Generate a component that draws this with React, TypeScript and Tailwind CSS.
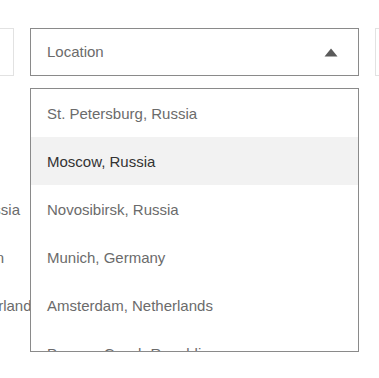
const cities = [
  'St. Petersburg, Russia',
  'Moscow, Russia',
  'Novosibirsk, Russia',
  'Munich, Germany',
  'Amsterdam, Netherlands',
  'Prague, Czech Republic',
]

function Caret() {
  return (
    <svg width="14" height="9" viewBox="0 0 14 9" className="shrink-0">
      <path d="M7 0.5 L13.5 8.5 L0.5 8.5 Z" fill="#5a5a5a" />
    </svg>
  )
}

function SideColumn() {
  return (
    <div className="w-[329px] shrink-0 ml-[-315px] flex flex-col gap-3">
      <div className="h-12 border border-[#e2e2e2] bg-white" />
      <div className="flex flex-col text-[15px] text-[#6b6b6b] pt-[2px]">
        <div className="h-12" />
        <div className="h-12" />
        <div className="h-12 flex items-center justify-end mr-[-6px]">Novosibirsk, Russia</div>
        <div className="h-12 flex items-center justify-end mr-[10px]">Berlin</div>
        <div className="h-12 flex items-center justify-end mr-[-25px]">Amsterdam, Netherlands</div>
      </div>
    </div>
  )
}

function LocationSelect() {
  return (
    <div className="w-[329px] shrink-0 flex flex-col gap-3 relative z-10">
      <div className="h-12 border border-[#8a8a8a] bg-white flex items-center justify-between pl-4 pr-[20px] text-[15px] text-[#6b6b6b]">
        <span>Location</span>
        <Caret />
      </div>
      <div className="h-[264px] border border-[#8a8a8a] bg-white overflow-hidden">
        {cities.map((city, i) => (
          <div
            key={city}
            className={
              i === 1
                ? 'h-12 flex items-center px-4 pt-[2px] text-[15px] bg-[#f2f2f2] text-[#333333]'
                : 'h-12 flex items-center px-4 pt-[2px] text-[15px] text-[#6b6b6b]'
            }
          >
            {city}
          </div>
        ))}
      </div>
    </div>
  )
}

export default function App() {
  return (
    <div
      className="w-[379px] h-[378px] bg-white overflow-hidden pt-7"
      style={{ fontFamily: '"Liberation Sans", Arial, sans-serif' }}
    >
      <div className="flex gap-4">
        <SideColumn />
        <LocationSelect />
        <div className="w-[329px] shrink-0">
          <div className="h-12 border border-[#e2e2e2] bg-white" />
        </div>
      </div>
    </div>
  )
}
